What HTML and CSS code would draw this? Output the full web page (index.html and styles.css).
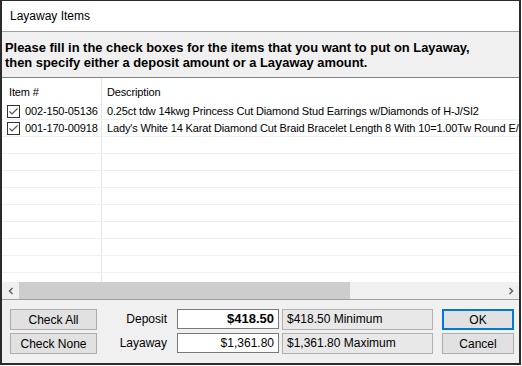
FILE: index.html
```html
<!DOCTYPE html>
<html lang="en">
<head>
    <meta charset="UTF-8">
    <title>Layaway Items</title>
    <link rel="stylesheet" href="styles.css">
</head>
<body>
    <div class="window">
        <div class="titlebar">Layaway Items</div>
        <div class="instructions">
            Please fill in the check boxes for the items that you want to put on Layaway,<br>
            then specify either a deposit amount or a Layaway amount.
        </div>
        <div class="list">
            <div class="list-head">
                <div class="col-item">Item #</div>
                <div class="col-desc">Description</div>
            </div>
            <div class="list-body">
                <div class="row">
                    <div class="col-item"><span class="check"><svg width="13" height="13" viewBox="0 0 13 13"><path d="M2.5 6.5 L5 9 L10.5 3.5" fill="none" stroke="#555" stroke-width="1.2"/></svg></span>002-150-05136</div>
                    <div class="col-desc">0.25ct tdw 14kwg Princess Cut Diamond Stud Earrings w/Diamonds of H-J/SI2</div>
                </div>
                <div class="row">
                    <div class="col-item"><span class="check"><svg width="13" height="13" viewBox="0 0 13 13"><path d="M2.5 6.5 L5 9 L10.5 3.5" fill="none" stroke="#555" stroke-width="1.2"/></svg></span>001-170-00918</div>
                    <div class="col-desc">Lady's White 14 Karat Diamond Cut Braid Bracelet Length 8 With 10=1.00Tw Round E/F Color</div>
                </div>
                <div class="row"><div class="col-item"></div><div class="col-desc"></div></div>
                <div class="row"><div class="col-item"></div><div class="col-desc"></div></div>
                <div class="row"><div class="col-item"></div><div class="col-desc"></div></div>
                <div class="row"><div class="col-item"></div><div class="col-desc"></div></div>
                <div class="row"><div class="col-item"></div><div class="col-desc"></div></div>
                <div class="row"><div class="col-item"></div><div class="col-desc"></div></div>
                <div class="row"><div class="col-item"></div><div class="col-desc"></div></div>
                <div class="row"><div class="col-item"></div><div class="col-desc"></div></div>
                <div class="row"><div class="col-item"></div><div class="col-desc"></div></div>
            </div>
            <div class="hscroll">
                <div class="arrow"><svg width="8" height="8" viewBox="0 0 8 8"><path d="M5.5 1 L2.5 4 L5.5 7" fill="none" stroke="#606060" stroke-width="1.5"/></svg></div>
                <div class="track"><div class="thumb"></div></div>
                <div class="arrow"><svg width="8" height="8" viewBox="0 0 8 8"><path d="M2.5 1 L5.5 4 L2.5 7" fill="none" stroke="#606060" stroke-width="1.5"/></svg></div>
            </div>
        </div>
        <div class="bottom">
            <button class="btn">Check All</button>
            <div class="label">Deposit</div>
            <div class="input bold">$418.50</div>
            <div class="info">$418.50 Minimum</div>
            <button class="btn default">OK</button>

            <button class="btn">Check None</button>
            <div class="label">Layaway</div>
            <div class="input">$1,361.80</div>
            <div class="info">$1,361.80 Maximum</div>
            <button class="btn">Cancel</button>
        </div>
    </div>
</body>
</html>
```

FILE: styles.css
```css
body {
    margin: 0;
    background: #fff;
    font-family: "Liberation Sans", Arial, sans-serif;
    font-size: 11px;
    color: #000;
}
.window {
    width: 521px;
    height: 365px;
    box-sizing: border-box;
    border: 2px solid #2b2b2b;
    border-top-width: 1px;
    display: flex;
    flex-direction: column;
    overflow: hidden;
}
.titlebar {
    height: 30px;
    line-height: 30px;
    padding-left: 8px;
    font-size: 12px;
    border-bottom: 1px solid #a0a0a0;
    flex-shrink: 0;
}
.instructions {
    height: 46px;
    box-sizing: border-box;
    padding: 8px 0 0 3px;
    background: #f0f0f0;
    font-weight: bold;
    font-size: 12.9px;
    line-height: 15px;
    border-bottom: 1px solid #828282;
    flex-shrink: 0;
}
.list {
    height: 221px;
    display: flex;
    flex-direction: column;
    background: #fff;
    border-bottom: 1px solid #a0a0a0;
    flex-shrink: 0;
    letter-spacing: -0.15px;
}
.list-head {
    height: 25px;
    display: flex;
    flex-shrink: 0;
}
.list-head .col-item,
.list-head .col-desc {
    padding-top: 8px;
}
.col-item {
    width: 100px;
    flex-shrink: 0;
    padding-left: 5px;
    box-sizing: border-box;
    border-right: 1px solid #e5e5e5;
    display: flex;
    align-items: center;
    white-space: nowrap;
}
.list-head .col-item {
    align-items: flex-start;
    padding-left: 7px;
}
.col-desc {
    padding-left: 5px;
    white-space: nowrap;
    flex: 1;
    overflow: hidden;
}
.list-body {
    flex: 1;
    overflow: hidden;
}
.row {
    height: 17px;
    box-sizing: border-box;
    border-bottom: 1px solid #f0f0f0;
    display: flex;
    line-height: 16px;
}
.check {
    width: 13px;
    height: 13px;
    box-sizing: border-box;
    border: 1px solid #333;
    background: #fff;
    margin: 0 5px 0 0;
    display: flex;
    align-items: center;
    justify-content: center;
}
.check svg {
    flex-shrink: 0;
}
.hscroll {
    height: 17px;
    display: flex;
    background: #f0f0f0;
    flex-shrink: 0;
}
.arrow {
    width: 17px;
    display: flex;
    align-items: center;
    justify-content: center;
}
.track {
    flex: 1;
}
.thumb {
    width: 331px;
    height: 17px;
    background: #cdcdcd;
}
.bottom {
    flex: 1;
    background: #f0f0f0;
    padding: 9px 0 0 8px;
    display: grid;
    grid-template-columns: 87px 80px 105px 160px 72px;
    grid-template-rows: 21px 21px;
    row-gap: 3px;
}
.btn {
    width: 87px;
    height: 21px;
    margin: 0;
    padding: 0;
    background: #e1e1e1;
    border: 1px solid #adadad;
    font-family: "Liberation Sans", Arial, sans-serif;
    font-size: 12px;
    color: #000;
}
.btn.default,
.bottom .btn:last-child {
    width: 72px;
}
.btn.default {
    border: 2px solid #0078d7;
}
.label {
    text-align: right;
    padding-right: 10px;
    line-height: 20px;
    font-size: 12px;
}
.input {
    width: 102px;
    height: 20px;
    box-sizing: border-box;
    border: 1px solid #7a7a7a;
    background: #fff;
    text-align: right;
    padding-right: 4px;
    line-height: 18px;
    font-size: 12px;
}
.input.bold {
    font-weight: bold;
    font-size: 13px;
}
.info {
    width: 151px;
    height: 21px;
    box-sizing: border-box;
    border: 1px solid #b0b0b0;
    background: #e8e8e8;
    padding-left: 4px;
    line-height: 19px;
    font-size: 12px;
}
```
